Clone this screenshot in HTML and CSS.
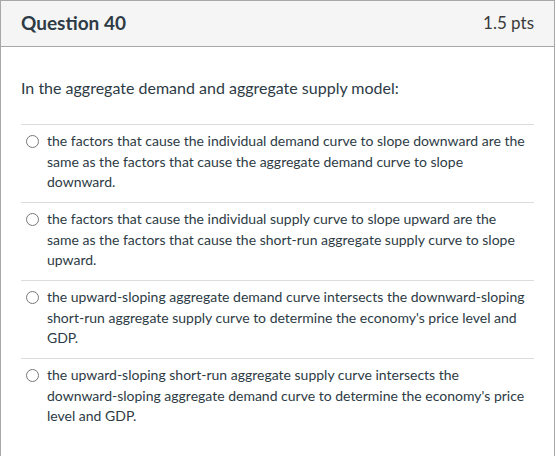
FILE: index.html
```html
<!DOCTYPE html>
<html>
<head>
<meta charset="utf-8">
<link rel="stylesheet" href="styles.css">
</head>
<body>
<div class="card">
  <div class="header">
    <div class="title">Question 40</div>
    <div class="pts">1.5 pts</div>
  </div>
  <div class="body">
    <p class="question">In the aggregate demand and aggregate supply model:</p>
    <div class="answers">
      <label class="answer"><span class="radio"></span><span class="text">the factors that cause the individual demand curve to slope downward are the same as the factors that cause the aggregate demand curve to slope downward.</span></label>
      <label class="answer"><span class="radio"></span><span class="text">the factors that cause the individual supply curve to slope upward are the same as the factors that cause the short-run aggregate supply curve to slope upward.</span></label>
      <label class="answer"><span class="radio"></span><span class="text">the upward-sloping aggregate demand curve intersects the downward-sloping short-run aggregate supply curve to determine the economy's price level and GDP.</span></label>
      <label class="answer"><span class="radio"></span><span class="text">the upward-sloping short-run aggregate supply curve intersects the downward-sloping aggregate demand curve to determine the economy's price level and GDP.</span></label>
    </div>
  </div>
</div>
</body>
</html>
```
FILE: styles.css
```css
html, body {
  margin: 0;
  padding: 0;
  background: #fff;
}
body {
  font-family: Lato, "Open Sans", sans-serif;
  color: #2d3b45;
}
.card {
  width: 553px;
  height: 470px;
  border: 1px solid #a8a8a8;
}
.header {
  box-sizing: border-box;
  height: 46px;
  background: #f5f5f5;
  border-bottom: 1px solid #a8a8a8;
  display: flex;
  align-items: center;
  justify-content: space-between;
  padding: 0 20px 3px 20px;
}
.title {
  font-size: 19px;
  font-weight: 700;
}
.pts {
  font-size: 17px;
  color: #3a3a3a;
}
.body {
  padding: 0 20px;
}
.question {
  box-sizing: border-box;
  margin: 0;
  padding-top: 31px;
  font-size: 16px;
  line-height: 20px;
  height: 77px;
}
.answer {
  box-sizing: border-box;
  display: flex;
  align-items: flex-start;
  border-top: 1px solid #dcdcdc;
  padding: 6px 6px 0 5px;
  font-size: 14px;
  line-height: 20.5px;
  height: 78px;
}
.radio {
  flex: none;
  width: 11px;
  height: 11px;
  border: 1.3px solid #777;
  border-radius: 50%;
  margin-top: 4px;
  margin-right: 8px;
}
.text {
  flex: 1;
}
```
